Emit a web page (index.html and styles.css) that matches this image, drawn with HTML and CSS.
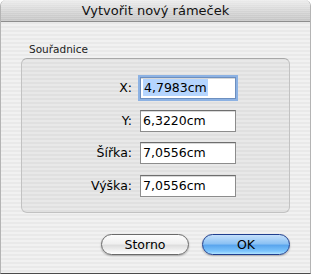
FILE: index.html
```html
<!DOCTYPE html>
<html>
  <head>
    <title>Vytvořit nový rámeček</title>
    <link rel="stylesheet" href="styles.css">
  </head>
  <body>
    <div class="window">
      <div class="titlebar">Vytvořit nový rámeček</div>
      <div class="content">
        <p class="group-label">Souřadnice</p>
        <div class="group">
          <div class="form">
            <label class="field-label">X:</label>
            <div class="field focused"><span class="selected">4,7983cm</span></div>

            <label class="field-label">Y:</label>
            <div class="field">6,3220cm</div>

            <label class="field-label">Šířka:</label>
            <div class="field">7,0556cm</div>

            <label class="field-label">Výška:</label>
            <div class="field">7,0556cm</div>
          </div>
        </div>
        <div class="buttons">
          <button class="aqua-button">Storno</button>
          <button class="aqua-button default">OK</button>
        </div>
      </div>
    </div>
  </body>
</html>
```

FILE: styles.css
```css
body {
  margin: 0;
  background-color: white;
  font-family: "DejaVu Sans", "Liberation Sans", sans-serif;
  color: black;
}
.window {
  width: 311px;
  height: 274px;
  box-sizing: border-box;
  border-left: 1px solid #b4b4b4;
  border-right: 1px solid #b4b4b4;
  border-bottom: 1px solid #4a4a4a;
  border-radius: 6px 6px 0 0;
  overflow: hidden;
  background: repeating-linear-gradient(
    to bottom,
    #f1f1f1 0px,
    #f1f1f1 2px,
    #e9e9e9 2px,
    #e9e9e9 4px
  );
}
.titlebar {
  height: 22px;
  box-sizing: border-box;
  border-bottom: 1px solid #8e8e8e;
  background:
    repeating-linear-gradient(
      to bottom,
      rgba(255, 255, 255, 0.18) 0px,
      rgba(255, 255, 255, 0.18) 1px,
      rgba(0, 0, 0, 0) 1px,
      rgba(0, 0, 0, 0) 2px
    ),
    linear-gradient(to bottom, #ececec, #d2d2d2 60%, #c4c4c4);
  text-align: center;
  font-size: 13px;
  line-height: 21px;
  color: #111;
}
.content {
  padding: 0 20px 0 20px;
}
.group-label {
  margin: 0;
  padding: 21px 0 0 8px;
  height: 15px;
  font-size: 10.5px;
  line-height: 13px;
  color: #222;
}
.group {
  height: 155px;
  box-sizing: border-box;
  border: 1px solid #c2c2c2;
  border-top-color: #a8a8a8;
  border-radius: 6px;
  background-color: rgba(0, 0, 0, 0.035);
  padding-top: 18px;
}
.form {
  display: grid;
  grid-template-columns: 110px 96px;
  column-gap: 8px;
  row-gap: 10.5px;
}
.field-label {
  text-align: right;
  font-size: 12.5px;
  line-height: 22px;
}
.field {
  height: 22px;
  box-sizing: border-box;
  border: 1px solid #8c8c8c;
  border-top-color: #6e6e6e;
  background-color: white;
  font-size: 12.5px;
  line-height: 19px;
  padding-left: 2px;
  box-shadow: inset 0 1px 0 #d8d8d8;
}
.focused {
  border-color: #6d8fbf;
  box-shadow: 0 0 0 2px #8db2e3, inset 0 1px 0 #d8d8d8;
}
.selected {
  background-color: #b5d5fe;
  padding: 1px 1px;
}
.buttons {
  display: flex;
  justify-content: flex-end;
  gap: 13px;
  margin-top: 21px;
  padding-right: 0;
}
.aqua-button {
  width: 88px;
  height: 21px;
  border-radius: 11px;
  border: 1px solid #6a6a6a;
  font-family: "DejaVu Sans", "Liberation Sans", sans-serif;
  font-size: 12.5px;
  color: black;
  padding: 0;
  background: linear-gradient(to bottom, #fdfdfd 0%, #f0f0f0 45%, #dedede 55%, #f4f4f4 85%, #ffffff 100%);
  box-shadow: 0 1px 2px rgba(0, 0, 0, 0.3);
}
.default {
  border-color: #1f3e8e;
  background: linear-gradient(to bottom, #c4e0fb 0%, #8cc2f4 45%, #5aa6ee 55%, #7cc4fc 85%, #b0e4ff 100%);
}
```
